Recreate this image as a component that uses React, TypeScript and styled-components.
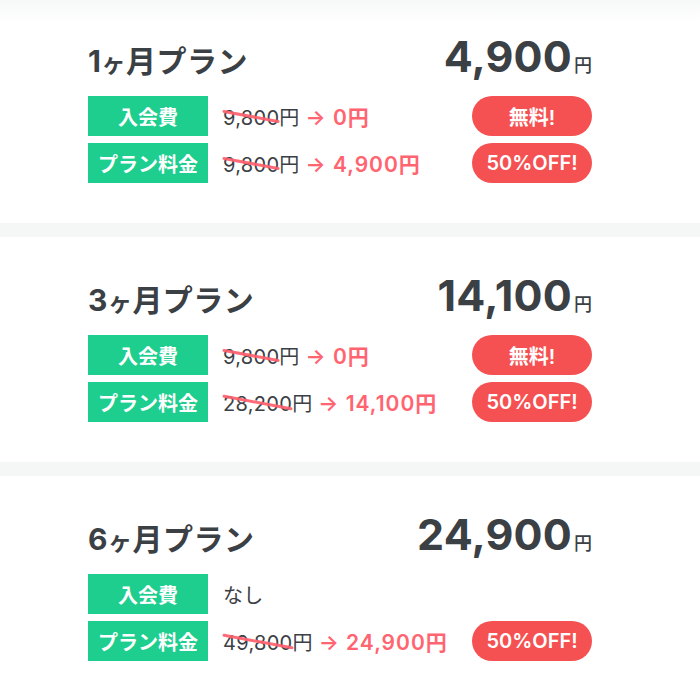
import React from "react";
import styled, { createGlobalStyle } from "styled-components";

const GlobalStyle = createGlobalStyle`
  html, body { margin: 0; padding: 0; background: #ffffff; }
  body {
    font-family: "Inter", "Noto Sans CJK JP", sans-serif;
    color: #3b4045;
    -webkit-font-smoothing: antialiased;
  }
`;

const List = styled.div`
  display: flex;
  flex-direction: column;
  gap: 14px;
  margin-top: -2px;
  background: #f5f7f7;
  min-height: 702px;
`;

const Card = styled.section<{ $top?: boolean }>`
  background: ${(p) =>
    p.$top ? "linear-gradient(to bottom, #f6f7f7 0px, #ffffff 24px)" : "#ffffff"};
  height: 225px;
  box-sizing: border-box;
  padding: 34px 108px 40px 88px;
  display: flex;
  flex-direction: column;
`;

const Header = styled.div`
  display: flex;
  justify-content: space-between;
  align-items: baseline;
  line-height: 48px;
  height: 48px;
  margin-bottom: 16px;
`;

const Title = styled.h2`
  margin: 0;
  font-size: 30px;
  font-weight: 700;
  color: #3b4045;
  letter-spacing: 0.5px;
`;

const Small = styled.span`
  font-size: 24px;
`;

const Total = styled.div`
  font-size: 43px;
  font-weight: 700;
  color: #3b4045;
  letter-spacing: 0.2px;
`;

const TotalYen = styled.span`
  font-size: 18px;
  font-weight: 500;
  margin-left: 2px;
  letter-spacing: 0;
`;

const Rows = styled.div`
  display: grid;
  grid-template-columns: 120px 1fr 120px;
  grid-auto-rows: 40px;
  row-gap: 7px;
  align-items: center;
`;

const Label = styled.div`
  height: 40px;
  background: #1dce8e;
  color: #ffffff;
  font-size: 20px;
  font-weight: 700;
  display: flex;
  align-items: center;
  justify-content: center;
`;

const Detail = styled.div`
  padding-left: 15px;
  font-size: 20px;
  color: #3b4045;
  white-space: nowrap;
  letter-spacing: 0.3px;
`;

const Struck = styled.span`
  position: relative;
  &::after {
    content: "";
    position: absolute;
    left: -1px;
    right: -1px;
    top: 50%;
    margin-top: -3px;
    height: 3px;
    border-radius: 2px;
    background: rgba(255, 96, 108, 0.92);
    transform: rotate(10.5deg);
  }
`;

const New = styled.span`
  color: #ff6470;
  font-weight: 600;
  font-size: 21px;
  letter-spacing: 1px;
`;

const Badge = styled.div`
  grid-column: 3;
  height: 40px;
  border-radius: 20px;
  background: #f55152;
  color: #ffffff;
  font-size: 20px;
  font-weight: 600;
  display: flex;
  align-items: center;
  justify-content: center;
`;

type Row = { label: string; old?: string; now?: string; plain?: string; badge?: string };
type Plan = { months: string; total: string; rows: Row[] };

const plans: Plan[] = [
  {
    months: "1",
    total: "4,900",
    rows: [
      { label: "入会費", old: "9,800", now: "0", badge: "無料!" },
      { label: "プラン料金", old: "9,800", now: "4,900", badge: "50%OFF!" },
    ],
  },
  {
    months: "3",
    total: "14,100",
    rows: [
      { label: "入会費", old: "9,800", now: "0", badge: "無料!" },
      { label: "プラン料金", old: "28,200", now: "14,100", badge: "50%OFF!" },
    ],
  },
  {
    months: "6",
    total: "24,900",
    rows: [
      { label: "入会費", plain: "なし" },
      { label: "プラン料金", old: "49,800", now: "24,900", badge: "50%OFF!" },
    ],
  },
];

export default function App() {
  return (
    <>
      <GlobalStyle />
      <List>
        {plans.map((p, i) => (
          <Card key={p.months} $top={i === 0}>
            <Header>
              <Title>
                {p.months}
                <Small>ヶ</Small>月プラン
              </Title>
              <Total>
                {p.total}
                <TotalYen>円</TotalYen>
              </Total>
            </Header>
            <Rows>
              {p.rows.map((r) => (
                <React.Fragment key={r.label}>
                  <Label>{r.label}</Label>
                  <Detail>
                    {r.plain ? (
                      r.plain
                    ) : (
                      <>
                        <Struck>{r.old}</Struck>円 <New>→ {r.now}円</New>
                      </>
                    )}
                  </Detail>
                  {r.badge ? <Badge>{r.badge}</Badge> : <span />}
                </React.Fragment>
              ))}
            </Rows>
          </Card>
        ))}
      </List>
    </>
  );
}
